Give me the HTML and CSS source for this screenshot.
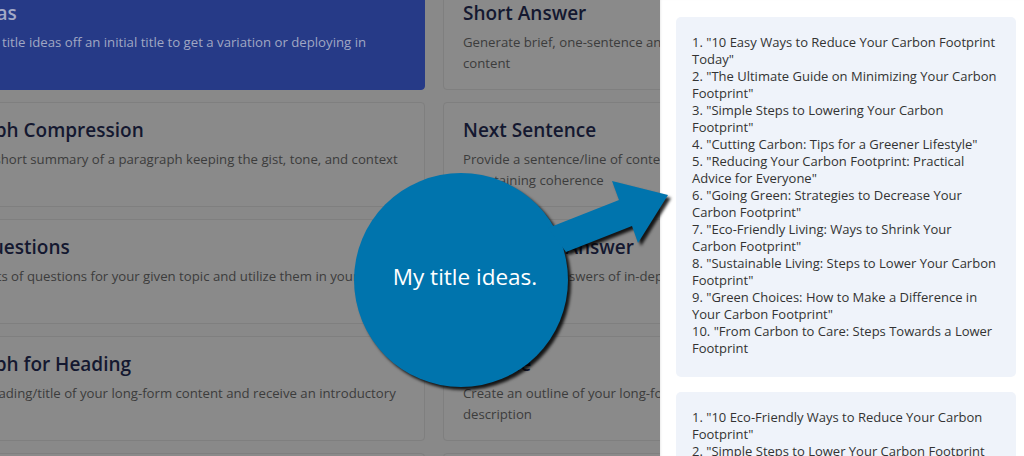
FILE: index.html
```html
<!DOCTYPE html>
<html lang="en">
<head>
<meta charset="utf-8">
<title>Templates</title>
<link rel="stylesheet" href="styles.css">
</head>
<body>
<div class="app">
  <main class="main">
    <div class="board">
      <div class="card card-active">
        <h3 class="card-title">Blog Ideas</h3>
        <p class="card-desc">Create fresh title ideas off an initial title to get a variation or deploying in</p>
      </div>
      <div class="card">
        <h3 class="card-title">Short Answer</h3>
        <p class="card-desc">Generate brief, one-sentence answers to questions that can be used in your content</p>
      </div>
      <div class="card">
        <h3 class="card-title">Paragraph Compression</h3>
        <p class="card-desc">Generate a short summary of a paragraph keeping the gist, tone, and context</p>
      </div>
      <div class="card">
        <h3 class="card-title">Next Sentence</h3>
        <p class="card-desc">Provide a sentence/line of content and get the next line written for you while maintaining coherence</p>
      </div>
      <div class="card">
        <h3 class="card-title">Topic Questions</h3>
        <p class="card-desc">Generate lists of questions for your given topic and utilize them in your content</p>
      </div>
      <div class="card">
        <h3 class="card-title">Long Form Answer</h3>
        <p class="card-desc">Generate long answers of in-depth</p>
      </div>
      <div class="card">
        <h3 class="card-title">Paragraph for Heading</h3>
        <p class="card-desc">Enter the heading/title of your long-form content and receive an introductory</p>
      </div>
      <div class="card">
        <h3 class="card-title">Outline</h3>
        <p class="card-desc">Create an outline of your long-form content with headings, subheadings and a description</p>
      </div>
      <div class="card">
        <h3 class="card-title">Rewrite</h3>
        <p class="card-desc">Rewrite your content</p>
      </div>
      <div class="card">
        <h3 class="card-title">Summary</h3>
        <p class="card-desc">Summarize your content</p>
      </div>
    </div>
  </main>
  <aside class="drawer">
    <div class="result">
      <div>1. "10 Easy Ways to Reduce Your Carbon Footprint Today"</div>
      <div>2. "The Ultimate Guide on Minimizing Your Carbon Footprint"</div>
      <div>3. "Simple Steps to Lowering Your Carbon Footprint"</div>
      <div>4. "Cutting Carbon: Tips for a Greener Lifestyle"</div>
      <div>5. "Reducing Your Carbon Footprint: Practical Advice for Everyone"</div>
      <div>6. "Going Green: Strategies to Decrease Your Carbon Footprint"</div>
      <div>7. "Eco-Friendly Living: Ways to Shrink Your Carbon Footprint"</div>
      <div>8. "Sustainable Living: Steps to Lower Your Carbon Footprint"</div>
      <div>9. "Green Choices: How to Make a Difference in Your Carbon Footprint"</div>
      <div>10. "From Carbon to Care: Steps Towards a Lower Footprint</div>
    </div>
    <div class="result">
      <div>1. "10 Eco-Friendly Ways to Reduce Your Carbon Footprint"</div>
      <div>2. "Simple Steps to Lower Your Carbon Footprint Today"</div>
      <div>3. "Going Green: How to Cut Your Carbon Emissions"</div>
    </div>
  </aside>
  <div class="callout">
    <svg class="callout-shape" width="1024" height="456" viewBox="0 0 1024 456" aria-hidden="true">
      <g class="callout-fill">
        <circle cx="461" cy="280" r="107"/>
        <polygon points="548,228 619,200 612,181 668,195 638,243 632,226 566,252"/>
      </g>
    </svg>
    <div class="callout-text">My title ideas.</div>
  </div>
</div>
</body>
</html>
```
FILE: styles.css
```css
* { box-sizing: border-box; }
html, body { margin: 0; padding: 0; }
body {
  width: 1024px;
  height: 456px;
  overflow: hidden;
  font-family: "Open Sans", "Noto Sans", sans-serif;
  background: #898989;
}
.app {
  position: relative;
  display: flex;
  width: 1024px;
  height: 456px;
  overflow: hidden;
}
.main {
  flex: 0 0 660px;
  height: 456px;
  overflow: hidden;
  background: #898989;
}
.board {
  display: grid;
  grid-template-columns: 522px 522px;
  grid-auto-rows: 105px;
  column-gap: 18px;
  row-gap: 12px;
  margin-top: -15px;
  margin-left: -97px;
  width: 1062px;
}
.card {
  border: 1px solid #7f7f7f;
  border-radius: 4px;
  background: #8a8a8a;
  padding: 15px 12px 15px 19px;
  overflow: hidden;
}
.card-active {
  background: #263a87;
  border-color: #263a87;
}
.card-title {
  margin: 0;
  font-size: 19px;
  line-height: 24px;
  font-weight: 600;
  color: #141830;
  white-space: nowrap;
}
.card-desc {
  margin: 7px 0 0;
  font-size: 13.2px;
  line-height: 21px;
  color: #3c3c3c;
}
.card-active .card-title { color: #a3aac6; }
.card-active .card-desc { color: #a0a7c3; }

.drawer {
  flex: 1;
  background: #ffffff;
  padding: 17px 8px 0 16px;
  display: flex;
  flex-direction: column;
  gap: 15px;
  box-shadow: inset 2px 0 2px -1px rgba(0,0,0,0.08);
}
.result {
  background: #eff3fa;
  border-radius: 5px;
  padding: 17px 19px 20px 16px;
  font-size: 13px;
  line-height: 17px;
  color: #333333;
}
.callout {
  position: absolute;
  left: 0;
  top: 0;
  width: 1024px;
  height: 456px;
  pointer-events: none;
}
.callout-shape {
  position: absolute;
  left: 0;
  top: 0;
}
.callout-fill {
  fill: #0074ad;
  filter: drop-shadow(3px 3px 1.5px rgba(0,0,0,0.85));
}
.callout-text {
  position: absolute;
  left: 361px;
  top: 262px;
  width: 208px;
  text-align: center;
  font-family: "Open Sans", "Noto Sans", sans-serif;
  font-size: 22.5px;
  line-height: 30px;
  color: #ffffff;
}
```
